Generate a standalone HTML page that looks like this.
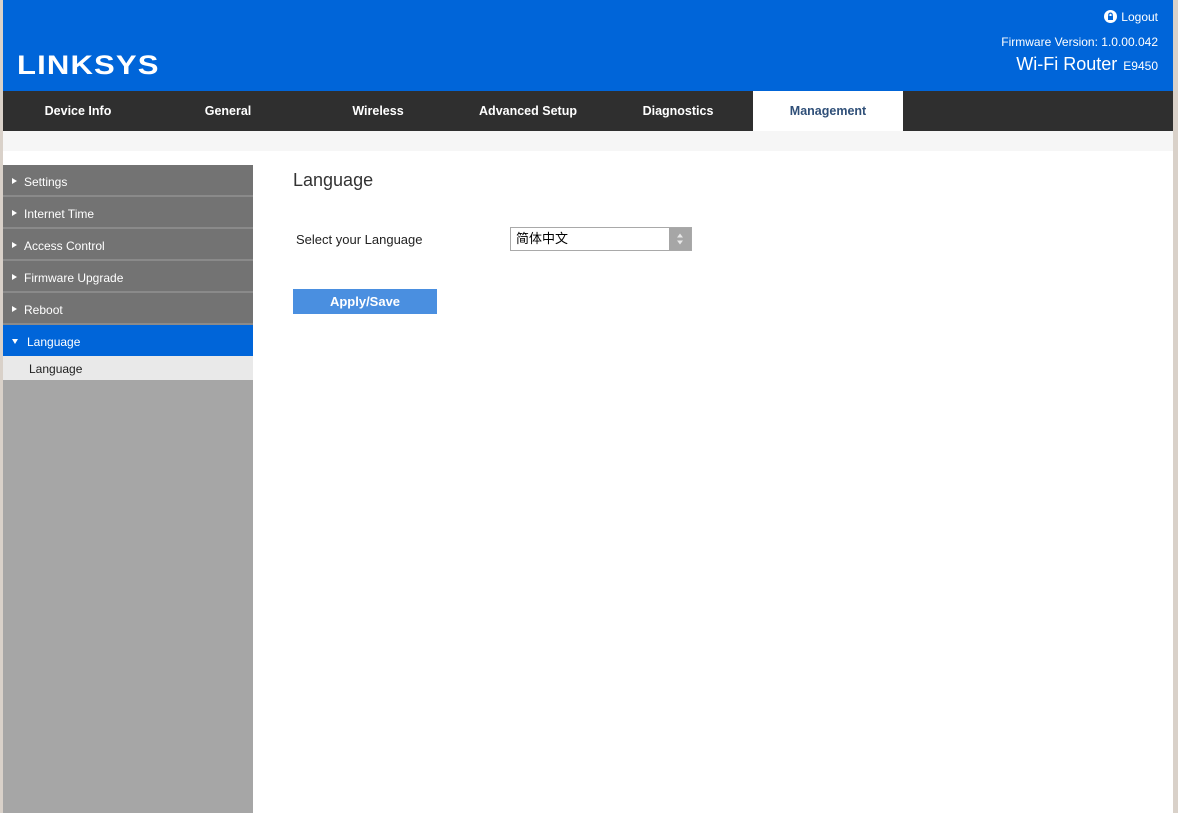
<!DOCTYPE html>
<html><head><meta charset="utf-8"><style>
*{margin:0;padding:0;box-sizing:border-box}
body{width:1178px;height:813px;background:#d9d1c9;font-family:"Liberation Sans","Noto Sans CJK SC",sans-serif;position:relative;overflow:hidden}
#page{position:absolute;left:3px;top:0;width:1170px;height:813px;background:#fff}
#hdr{position:absolute;left:0;top:0;width:1170px;height:91px;background:#0065d9;color:#fff}
.logo{position:absolute;left:14px;top:50px;font-size:27px;font-weight:bold;letter-spacing:1px;transform:scaleX(1.15);transform-origin:left}
.lo{position:absolute;right:15px;top:10px;font-size:12px}
.fw{position:absolute;right:15px;top:35px;font-size:12px}
.wr{position:absolute;right:15px;top:54px;font-size:18px}
.wr small{font-size:12px;margin-left:6px}
#nav{position:absolute;left:0;top:91px;width:1170px;height:40px;background:#2f2f2f}
#nav div{position:absolute;top:0;width:150px;height:40px;line-height:40px;text-align:center;color:#fff;font-weight:bold;font-size:12.5px}
#nav div.on{background:#fff;color:#2f4f78}
#strip{position:absolute;left:0;top:131px;width:1170px;height:20px;background:#f6f6f6}
#side{position:absolute;left:0;top:165px;width:250px;height:648px;background:#a6a6a6}
.it{height:32px;background:#737373;color:#fff;font-size:12px;line-height:34px;padding-left:21px;border-bottom:2px solid #8a8a8a;position:relative}
.it:before{content:"";position:absolute;left:9px;top:13px;border-left:5px solid #fff;border-top:3.5px solid transparent;border-bottom:3.5px solid transparent}
.it.act{background:#0065d9;border-bottom:none;padding-left:24px;height:31px}
.it.act:before{left:9px;top:14px;border-top:5px solid #fff;border-left:3.5px solid transparent;border-right:3.5px solid transparent;border-bottom:none}
.sub{height:24px;background:#e9e9e9;font-size:12px;line-height:26px;padding-left:26px;color:#222}
h1{position:absolute;left:290px;top:170px;font-weight:normal;font-size:18px;color:#333}
.lab{position:absolute;left:293px;top:232px;font-size:13px;color:#222}
.sel{position:absolute;left:507px;top:227px;width:182px;height:24px;border:1px solid #a9a9a9;font-size:13px;line-height:22px;padding-left:5px}
.sel .ar{position:absolute;right:0;top:0;width:22px;height:22px;background:#a6a6a6}
.btn{position:absolute;left:290px;top:289px;width:144px;height:25px;background:#4a8fe0;color:#fff;font-size:13px;font-weight:bold;text-align:center;line-height:25px}
</style></head><body>
<div id="page">
<div id="hdr">
<div class="logo">LINKSYS</div>
<div class="lo"><svg width="13" height="13" viewBox="0 0 13 13" style="vertical-align:-2px;margin-right:4px"><circle cx="6.5" cy="6.5" r="6.5" fill="#fff"/><rect x="4" y="6" width="5" height="4" fill="#0065d9"/><path d="M4.8 6V4.8a1.7 1.7 0 0 1 3.4 0V6" stroke="#0065d9" stroke-width="1.2" fill="none"/></svg>Logout</div>
<div class="fw">Firmware Version: 1.0.00.042</div>
<div class="wr">Wi-Fi Router<small>E9450</small></div>
</div>
<div id="nav">
<div style="left:0">Device Info</div><div style="left:150px">General</div><div style="left:300px">Wireless</div><div style="left:450px">Advanced Setup</div><div style="left:600px">Diagnostics</div><div class="on" style="left:750px">Management</div>
</div>
<div id="strip"></div>
<div id="side">
<div class="it">Settings</div><div class="it">Internet Time</div><div class="it">Access Control</div><div class="it">Firmware Upgrade</div><div class="it">Reboot</div><div class="it act">Language</div><div class="sub">Language</div>
</div>
<h1>Language</h1>
<div class="lab">Select your Language</div>
<div class="sel">简体中文<div class="ar"><svg width="22" height="22"><path d="M8 9.5l3-4 3 4z M8 12.5l3 4 3-4z" fill="#e8e8e8"/></svg></div></div>
<div class="btn">Apply/Save</div>
</div>
</body></html>
